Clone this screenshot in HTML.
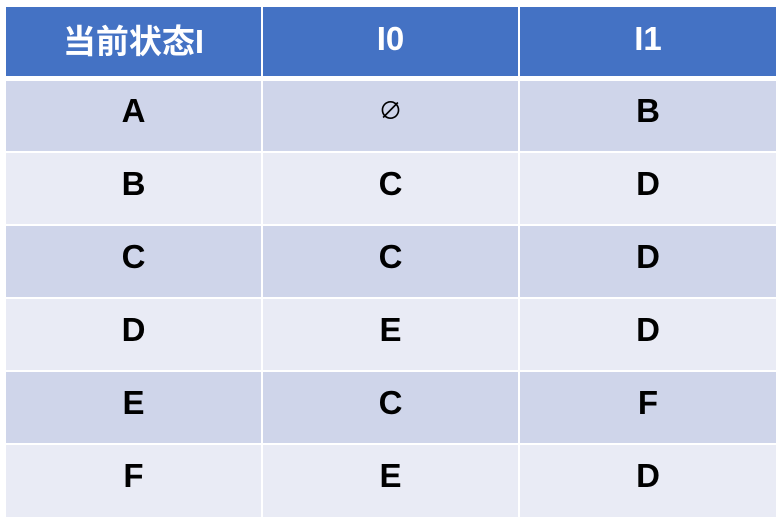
<!DOCTYPE html><html><head><meta charset="utf-8"><style>
body{margin:0;width:781px;height:519px;background:#fff;position:relative;overflow:hidden;font-family:"Liberation Sans","Noto Sans CJK SC",sans-serif;font-weight:bold}
.c{position:absolute;display:flex;align-items:center;justify-content:center;font-size:33px;color:#000;padding-bottom:10px;box-sizing:border-box}
.h{background:#4472C4;color:#fff;font-size:33px}
.o{background:#CFD5EA}.e{background:#E9EBF5}
</style></head><body>
<div class="c h" style="left:6px;top:7px;width:255px;height:69px;padding-bottom:6px">当前状态I</div>
<div class="c h" style="left:263px;top:7px;width:255px;height:69px;padding-bottom:6px">I0</div>
<div class="c h" style="left:520px;top:7px;width:256px;height:69px;padding-bottom:6px">I1</div>
<div class="c o" style="left:6px;top:81px;width:255px;height:70px">A</div>
<div class="c o" style="left:263px;top:81px;width:255px;height:70px;font-weight:normal;font-size:24px;padding-bottom:16px">∅</div>
<div class="c o" style="left:520px;top:81px;width:256px;height:70px">B</div>
<div class="c e" style="left:6px;top:153px;width:255px;height:71px">B</div>
<div class="c e" style="left:263px;top:153px;width:255px;height:71px">C</div>
<div class="c e" style="left:520px;top:153px;width:256px;height:71px">D</div>
<div class="c o" style="left:6px;top:226px;width:255px;height:71px">C</div>
<div class="c o" style="left:263px;top:226px;width:255px;height:71px">C</div>
<div class="c o" style="left:520px;top:226px;width:256px;height:71px">D</div>
<div class="c e" style="left:6px;top:299px;width:255px;height:71px">D</div>
<div class="c e" style="left:263px;top:299px;width:255px;height:71px">E</div>
<div class="c e" style="left:520px;top:299px;width:256px;height:71px">D</div>
<div class="c o" style="left:6px;top:372px;width:255px;height:71px">E</div>
<div class="c o" style="left:263px;top:372px;width:255px;height:71px">C</div>
<div class="c o" style="left:520px;top:372px;width:256px;height:71px">F</div>
<div class="c e" style="left:6px;top:445px;width:255px;height:72px">F</div>
<div class="c e" style="left:263px;top:445px;width:255px;height:72px">E</div>
<div class="c e" style="left:520px;top:445px;width:256px;height:72px">D</div>
</body></html>
